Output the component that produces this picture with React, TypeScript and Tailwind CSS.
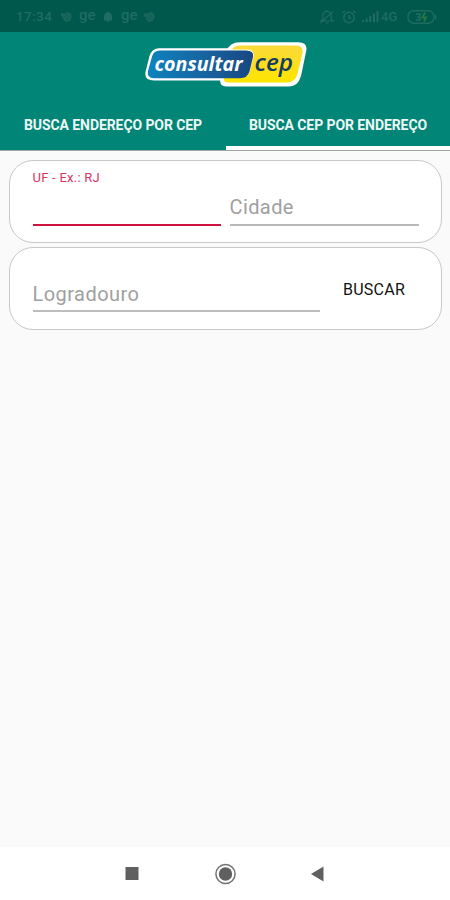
import { useState } from "react";

function StatusBar() {
  return (
    <div className="h-8 shrink-0 bg-[#00574b] flex items-center justify-between pl-[16px] pr-[13px] pt-px text-[#1f6d62]">
      <div className="flex items-center text-[13.5px] font-medium">
        <span className="w-[38px] tracking-[0.4px]">17:34</span>
        <GlobeIcon className="ml-[6px]" />
        <span className="ml-[6px] w-[17px] text-[15px] leading-none -mt-[3px]">ge</span>
        <svg width="10" height="12" viewBox="0 0 10 12" className="ml-[7px]" fill="currentColor">
          <path d="M5 0.5 7 2C8.6 3 9 4.5 9 6.5V9.5H6.5L5 11.5 3.5 9.5H1V6.5C1 4.5 1.4 3 3 2Z" />
        </svg>
        <span className="ml-[8px] w-[17px] text-[15px] leading-none -mt-[3px]">ge</span>
        <GlobeIcon className="ml-[5px]" />
      </div>
      <div className="flex items-center">
        <svg width="16" height="16" viewBox="0 0 16 16" fill="none" stroke="currentColor" strokeWidth="1.2">
          <path d="M2 12h12l-1.8-2V6.6a4.2 4.2 0 0 0-8.4 0V10L2 12ZM6.5 14h3M1.5 14 14 2.5M8 2.4V1" />
        </svg>
        <svg width="16" height="16" viewBox="0 0 16 16" fill="none" stroke="currentColor" strokeWidth="1.4" className="ml-[6px]">
          <circle cx="8" cy="8.5" r="5.2" />
          <path d="M1.5 4 4 1.8M14.5 4 12 1.8M8 6v3h2.2" />
        </svg>
        <svg width="17" height="13" viewBox="0 0 17 13" fill="currentColor" className="ml-[5px]">
          <path d="M0 10h2v2H0zM3.7 8.5h2V12h-2zM7.3 6h2v6h-2zM11 3.5h2V12h-2zM14.5 1h2v11h-2z" />
        </svg>
        <span className="ml-[2px] w-[17px] text-[13px] font-medium">4G</span>
        <svg width="30" height="14" viewBox="0 0 30 14" className="ml-[9px]" fill="none" stroke="currentColor" strokeWidth="1.4">
          <rect x="1" y="0.8" width="26" height="12.4" rx="5.5" />
          <path d="M28.7 5v4" />
          <path d="M9 4h4v3h-3M13 7v3H9" />
          <path d="M18 2.5 15.5 7.5H19L17 11.5" stroke="#2c7740" strokeWidth="1.8" />
        </svg>
      </div>
    </div>
  );
}

function GlobeIcon({ className }: { className?: string }) {
  return (
    <svg width="13" height="12" viewBox="0 0 13 12" className={className}>
      <path d="M1 2 5 2.5 7 .8 11 2.5 12 6 10 10 6.5 11.3 3.5 9.5 3 6.5 1 5Z" fill="#17665a" />
      <path d="M6 3 10 7M4.5 5 8.5 9" stroke="#0d6155" />
    </svg>
  );
}

function Logo() {
  return (
    <svg width="180" height="60" viewBox="0 0 180 60" className="block">
      <defs>
        <linearGradient id="blue" x1="0" y1="0" x2="1" y2="0">
          <stop offset="0" stopColor="#0d83bd" />
          <stop offset="0.55" stopColor="#1863a0" />
          <stop offset="1" stopColor="#184780" />
        </linearGradient>
        <linearGradient id="yellow" x1="0" y1="0" x2="0" y2="1">
          <stop offset="0" stopColor="#fbd93a" />
          <stop offset="1" stopColor="#fde500" />
        </linearGradient>
      </defs>
      <path
        d="M105 6.3H163Q173 6.3 171.2 15L166 40Q163 50.5 154 50.5H92Q84 50.5 85.5 43L91 16Q94 6.3 105 6.3Z"
        fill="#fff"
      />
      <path
        d="M24 12.2H112Q122 12 120 21L116 36Q114 44.5 105 44.5H19Q9 44.5 10.5 36L14.5 20Q17 12.2 24 12.2Z"
        fill="#fff"
      />
      <path
        d="M106 9.5H160Q169 9.5 167.5 17L162.5 38Q160 46.5 152 46.5H94Q88 46.5 89 42H105Q113 42 115 35L118.5 21Q120 14 112 13.5H97Q99 9.5 106 9.5Z"
        fill="url(#yellow)"
      />
      <path
        d="M25 14.5H111Q119.5 14.5 118 21L114.5 35.5Q112.5 42.2 105 42.2H19Q11.5 42.2 13 35L17 20.5Q18.5 14.5 25 14.5Z"
        fill="url(#blue)"
      />
      <text
        x="19.5"
        y="34.8"
        fill="#fff"
        textLength="88"
        lengthAdjust="spacingAndGlyphs"
        className="font-['Open_Sans',sans-serif] text-[20px] font-bold italic"
      >
        consultar
      </text>
      <text
        x="119.5"
        y="34.8"
        fill="#173c62"
        textLength="38.5"
        lengthAdjust="spacingAndGlyphs"
        className="font-['Open_Sans',sans-serif] text-[23.5px] font-semibold italic"
      >
        cep
      </text>
    </svg>
  );
}

const tabs = [
  { id: "cep", label: "BUSCA ENDEREÇO POR CEP" },
  { id: "address", label: "BUSCA CEP POR ENDEREÇO" },
];

export default function App() {
  const [active, setActive] = useState("address");

  return (
    <div className="w-[450px] h-[900px] flex flex-col overflow-hidden bg-[#fafafa] font-[Roboto,sans-serif]">
      <StatusBar />

      <header className="h-[119px] shrink-0 bg-[#018577] flex flex-col border-b border-[#9aa7a5]">
        <div className="h-[66px] pt-1 flex justify-center">
          <Logo />
        </div>
        <nav className="flex-1 grid grid-cols-[226px_224px]">
          {tabs.map((tab) => (
            <button
              key={tab.id}
              onClick={() => setActive(tab.id)}
              className={
                "pt-[6px] border-b-4 text-[14px] font-bold tracking-[-0.08px] whitespace-nowrap text-[#edf7f5] " +
                (active === tab.id ? "border-white" : "border-transparent")
              }
            >
              {tab.label}
            </button>
          ))}
        </nav>
      </header>

      <main className="flex-1 pl-[9px] pr-[8px] pt-[9px] flex flex-col gap-[4px]">
        <section className="h-[83px] rounded-[24px] border border-[#c8c8c8] bg-white px-[22.5px] flex gap-[9px]">
          <label className="w-[188px] shrink-0 h-[65px] border-b-2 border-[#d0123f] pt-[8px]">
            <span className="block text-[13px] leading-[18px] text-[#d83562] tracking-[0.25px]">UF - Ex.: RJ</span>
            <input className="block w-full bg-transparent outline-none" />
          </label>
          <input
            placeholder="Cidade"
            className="w-[189px] shrink-0 h-[65px] border-b-2 border-[#b8b8b8] pt-[29px] text-[20px] tracking-[0.4px] outline-none placeholder:text-[#a0a0a0]"
          />
        </section>

        <section className="h-[83px] rounded-[24px] border border-[#c8c8c8] bg-white pl-[22.5px] flex">
          <input
            placeholder="Logradouro"
            className="w-[287px] shrink-0 h-[64px] border-b-2 border-[#bdbdbd] pt-[30px] text-[20px] tracking-[0.45px] outline-none placeholder:text-[#a0a0a0]"
          />
          <button className="w-[109px] shrink-0 h-[83px] text-[16px] text-[#111] tracking-[0.25px]">BUSCAR</button>
        </section>
      </main>

      <footer className="h-[53px] shrink-0 bg-white flex items-center justify-center">
        <svg width="202" height="24" viewBox="0 0 202 24">
          <rect x="1.5" y="5" width="13" height="13" fill="#606060" />
          <circle cx="101.5" cy="12" r="9.6" fill="none" stroke="#747474" strokeWidth="1.5" />
          <circle cx="101.5" cy="12" r="6.7" fill="#606060" />
          <path d="M187 12 199.5 4.5V19.5Z" fill="#606060" />
        </svg>
      </footer>
    </div>
  );
}
